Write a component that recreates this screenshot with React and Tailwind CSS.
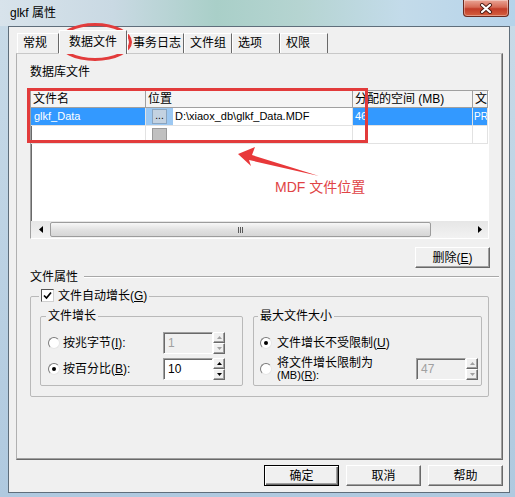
import React from "react";

const font = "font-['Liberation_Sans','Noto_Sans_CJK_SC',sans-serif]";

const raised =
  "bg-[#f0f0f0] border border-t-white border-l-white border-r-[#696969] border-b-[#696969] shadow-[inset_-1px_-1px_0_#a0a0a0]";
const sunken =
  "border border-t-[#a0a0a0] border-l-[#a0a0a0] border-r-white border-b-white shadow-[inset_1px_1px_0_#696969]";

const tabs = [
  { label: "常规", w: "w-[42px]" },
  { label: "数据文件", w: "w-[68px]", active: true },
  { label: "事务日志", w: "w-[57px]" },
  { label: "文件组", w: "w-[48px]" },
  { label: "选项", w: "w-[48px]" },
  { label: "权限", w: "w-[48px]" },
];

function Btn({ children, def, className = "" }) {
  const look = def
    ? "bg-[#f0f0f0] border border-black shadow-[inset_1px_1px_0_#fff,inset_-1px_-1px_0_#696969,inset_-2px_-2px_0_#a0a0a0]"
    : raised;
  return (
    <div className={`h-[21px] flex items-center justify-center leading-[16px] ${look} ${className}`}>
      {children}
    </div>
  );
}

function Spin({ disabled }) {
  const c = disabled ? "#a0a0a0" : "#000";
  return (
    <div className="w-[12px] h-[22px] flex flex-col">
      {["0,3 5,3 2.5,0", "0,0 5,0 2.5,3"].map((pts) => (
        <div key={pts} className={`h-[11px] flex items-center justify-center ${raised}`}>
          <svg width="5" height="3" viewBox="0 0 5 3">
            <polygon points={pts} fill={c} />
          </svg>
        </div>
      ))}
    </div>
  );
}

function NumField({ value, disabled }) {
  return (
    <div className="flex">
      <div
        className={`w-[50px] h-[22px] pl-[4px] leading-[20px] text-[12px] ${sunken} ${
          disabled ? "bg-[#f0f0f0] text-[#a0a0a0]" : "bg-white text-black"
        }`}
      >
        {value}
      </div>
      <Spin disabled={disabled} />
    </div>
  );
}

function Radio({ on }) {
  return (
    <div className="w-[12px] h-[12px] shrink-0 rounded-full bg-white border border-t-[#7a7a7a] border-l-[#7a7a7a] border-r-[#e6e6e6] border-b-[#e6e6e6] flex items-center justify-center">
      {on && <div className="w-[4px] h-[4px] rounded-full bg-black" />}
    </div>
  );
}

function Checkbox() {
  return (
    <div className="w-[13px] h-[13px] bg-white border border-t-[#555] border-l-[#555] border-r-[#d0d0d0] border-b-[#d0d0d0] flex items-center justify-center">
      <svg width="9" height="9" viewBox="0 0 9 9">
        <path d="M1 4.5 L3.5 7 L8 1.5" stroke="#000" strokeWidth="1.7" fill="none" />
      </svg>
    </div>
  );
}

function Grid() {
  const head = "h-full border-r border-[#a0a0a0] pl-[2px] leading-[16px] whitespace-nowrap overflow-hidden";
  const cell = "h-full border-r border-b border-[#e2e2e2] whitespace-nowrap overflow-hidden";
  return (
    <div className={`mt-[10px] ml-[13px] w-[459px] h-[149px] bg-white flex flex-col ${sunken}`}>
      <div className="h-[17px] flex bg-[#f4f4f4] border-b border-[#a0a0a0]">
        <div className={`w-[115px] ${head}`}>文件名</div>
        <div className={`w-[207px] ${head}`}>位置</div>
        <div className={`w-[120px] ${head}`}>分配的空间 (MB)</div>
        <div className={`flex-1 ${head}`}>文</div>
      </div>
      <div className="h-[18px] flex text-[11px] leading-[17px]">
        <div className={`w-[115px] pl-[3px] bg-[#3399ff] text-white ${cell}`}>glkf_Data</div>
        <div className={`w-[207px] flex ${cell}`}>
          <div className="w-[27px] h-full bg-[#9cc8f2] pl-[6px] pt-[1px]">
            <div className="w-[15px] h-[15px] bg-[#c3d2e1] border border-[#8aa5c0] text-[10px] leading-[12px] text-center">...</div>
          </div>
          <span className="ml-[2px]">D:\xiaox_db\glkf_Data.MDF</span>
        </div>
        <div className={`w-[120px] pl-[2px] bg-[#3399ff] text-white ${cell}`}>46</div>
        <div className={`flex-1 pl-[1px] text-[10px] bg-[#3399ff] text-white ${cell}`}>PR</div>
      </div>
      <div className="h-[18px] flex">
        <div className={`w-[115px] ${cell}`} />
        <div className={`w-[207px] pl-[6px] pt-[2px] ${cell} overflow-visible`}>
          <div className="w-[15px] h-[15px] bg-[#c0c0c0] border border-[#9a9a9a]" />
        </div>
        <div className={`w-[120px] ${cell}`} />
        <div className={`flex-1 ${cell}`} />
      </div>
      <div className="flex-1" />
      <div className="h-[17px] flex bg-[linear-gradient(180deg,#e6e6e6,#f2f2f2)]">
        <div className="w-[19px] flex items-center justify-center">
          <svg width="4" height="7" viewBox="0 0 4 7">
            <polygon points="4,0 4,7 0,3.5" fill="#000" />
          </svg>
        </div>
        <div className="w-[381px] my-[1px] rounded-[2px] border border-[#9c9c9c] bg-[linear-gradient(180deg,#f7f7f7,#e2e2e2_50%,#d6d6d6)] flex items-center justify-center">
          <div className="flex gap-[1px]">
            <div className="w-[1px] h-[6px] bg-[#5a5a5a]" />
            <div className="w-[1px] h-[6px] bg-[#5a5a5a]" />
            <div className="w-[1px] h-[6px] bg-[#5a5a5a]" />
          </div>
        </div>
        <div className="flex-1" />
        <div className="w-[17px] flex items-center justify-center">
          <svg width="4" height="7" viewBox="0 0 4 7">
            <polygon points="0,0 0,7 4,3.5" fill="#000" />
          </svg>
        </div>
      </div>
    </div>
  );
}

function FileProps() {
  return (
    <fieldset className="mt-[2px] ml-[13px] w-[459px] pb-[10px] border border-[#b9b9b9] rounded-[2px]">
      <legend className="ml-[8px] px-[2px]">
        <span className="inline-flex items-center gap-[4px] leading-[16px]">
          <Checkbox />
          <span>
            文件自动增长(<u>G</u>)
          </span>
        </span>
      </legend>
      <div className="mt-[3px] pl-[9px] flex gap-[10px]">
        <fieldset className="w-[203px] pb-[5px] border border-[#b9b9b9] rounded-[2px]">
          <legend className="ml-[5px] px-[2px] leading-[16px]">文件增长</legend>
          <div className="mt-[8px] pl-[7px] flex flex-col gap-[4px]">
            <div className="h-[22px] flex items-center">
              <Radio />
              <span className="ml-[3px] w-[100px]">
                按兆字节(<u>I</u>):
              </span>
              <NumField value="1" disabled />
            </div>
            <div className="h-[22px] flex items-center">
              <Radio on />
              <span className="ml-[3px] w-[100px]">
                按百分比(<u>B</u>):
              </span>
              <NumField value="10" />
            </div>
          </div>
        </fieldset>
        <fieldset className="w-[229px] pb-[5px] border border-[#b9b9b9] rounded-[2px]">
          <legend className="ml-[4px] px-[2px] leading-[16px]">最大文件大小</legend>
          <div className="mt-[8px] pl-[6px] flex flex-col gap-[4px]">
            <div className="h-[22px] flex items-center">
              <Radio on />
              <span className="ml-[5px]">
                文件增长不受限制(<u>U</u>)
              </span>
            </div>
            <div className="h-[22px] flex items-center">
              <Radio />
              <div className="ml-[5px] w-[139px] flex flex-col">
                <span className="leading-[13px]">将文件增长限制为</span>
                <span className="text-[11px] leading-[11px]">
                  (MB)(<u>R</u>):
                </span>
              </div>
              <NumField value="47" disabled />
            </div>
          </div>
        </fieldset>
      </div>
    </fieldset>
  );
}

export default function App() {
  return (
    <div
      className={`relative w-[515px] h-[497px] overflow-hidden flex flex-col text-[12px] text-black ${font} bg-[linear-gradient(180deg,#c9dbe8,#afc9df)]`}
    >
      {/* title bar */}
      <div className="h-[26px] flex items-start justify-between bg-[linear-gradient(90deg,#d8e3eb_0%,#c9d9e3_22%,#a9cfc8_42%,#b5d4d1_58%,#c3dbea_78%,#b6d3ea_100%)]">
        <span className="pl-[10px] pt-[5px] leading-[16px]">glkf 属性</span>
        <div className="mr-[6px] w-[46px] h-[17px] rounded-b-[4px] border border-t-0 border-[#6a2a20] bg-[linear-gradient(180deg,#eaa596_0%,#d66a55_45%,#c23c28_55%,#d5603f_100%)] shadow-[inset_0_0_0_1px_rgba(255,255,255,0.35)] flex items-center justify-center">
          <svg width="14" height="11" viewBox="0 0 14 11">
            <path d="M3 2 L11 9 M11 2 L3 9" stroke="#4a1a12" strokeWidth="4" strokeLinecap="round" />
            <path d="M3 2 L11 9 M11 2 L3 9" stroke="#fff" strokeWidth="2.2" strokeLinecap="round" />
          </svg>
        </div>
      </div>

      {/* client */}
      <div className="ml-[8px] w-[502px] h-[467px] border border-[#5f6e7b] bg-[#f0f0f0] flex flex-col">
        <div className="relative z-10 h-[26px] pl-[8px] flex items-end">
          {tabs.map((t) =>
            t.active ? (
              <div
                key={t.label}
                className={`${t.w} h-[24px] -mb-px bg-[#f0f0f0] border-t border-l border-white border-r border-r-[#696969] text-center leading-[22px]`}
              >
                {t.label}
              </div>
            ) : (
              <div
                key={t.label}
                className={`${t.w} h-[20px] border-t border-l border-white border-r border-r-[#696969] pl-[5px] leading-[18px]`}
              >
                {t.label}
              </div>
            )
          )}
        </div>

        <div className="ml-[7px] w-[487px] h-[407px] border border-t-[#c8c8c8] border-l-[#b0b0b0] border-r-[#696969] border-b-[#696969] shadow-[inset_-1px_-1px_0_#a0a0a0] flex flex-col">
          <div className="ml-[13px] mt-[10px] leading-[16px]">数据库文件</div>
          <Grid />
          <div className="mt-[8px] ml-[398px]">
            <Btn className="w-[75px]">
              删除(<u>E</u>)
            </Btn>
          </div>
          <div className="mt-[1px] ml-[13px] h-[16px] flex items-center">
            <span className="leading-[16px]">文件属性</span>
            <div className="ml-[6px] mr-[3px] flex-1 h-[2px] border-t border-[#a8a8a8] border-b border-b-white" />
          </div>
          <FileProps />
        </div>

        <div className="ml-[7px] w-[487px] mt-[5px] flex justify-end gap-[7px]">
          <Btn def className="w-[75px]">确定</Btn>
          <Btn className="w-[75px]">取消</Btn>
          <Btn className="w-[75px]">帮助</Btn>
        </div>
      </div>

      {/* red annotations */}
      <div className="absolute left-[58px] top-[23px] w-[74px] h-[38px] rounded-[50%] border-[3px] border-[#e23b3b]" />
      <div className="absolute left-[27px] top-[88px] w-[341px] h-[55px] border-[3px] border-[#e23b3b]" />
      <svg className="absolute left-[230px] top-[140px]" width="100" height="45" viewBox="230 140 100 45">
        <polygon points="238,154 255,147 252,155 319,176 249,160 251,166" fill="#e8383a" />
      </svg>
      <div className="absolute left-[275px] top-[178px] text-[14px] leading-[18px] text-[#e04345]">MDF 文件位置</div>
    </div>
  );
}
